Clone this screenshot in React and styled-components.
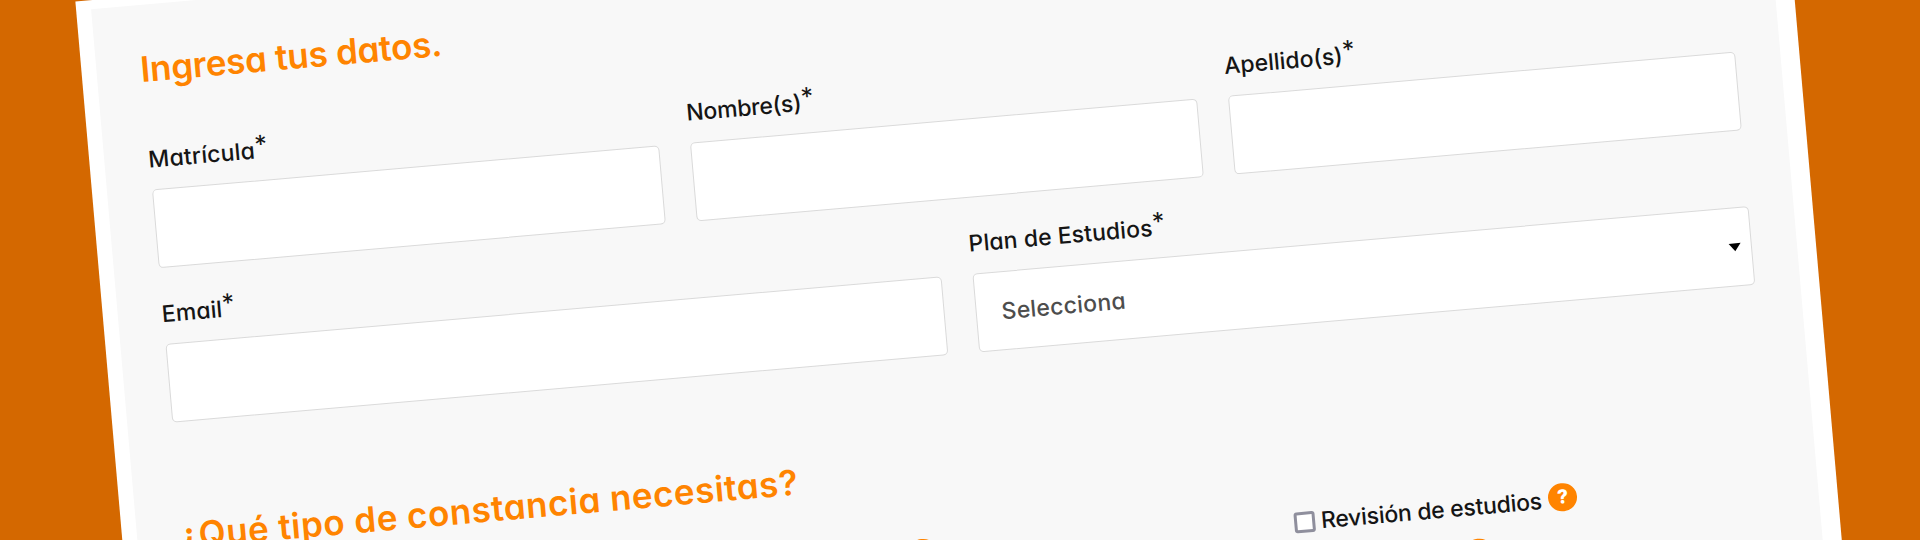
import React from 'react'
import styled, { createGlobalStyle } from 'styled-components'

const GlobalStyle = createGlobalStyle`
  * {
    box-sizing: border-box;
  }
  body {
    margin: 0;
    background: #d46800;
    font-family: Inter, 'Open Sans', sans-serif;
    /* single-storey a */
    font-feature-settings: 'cv11' 1, 'kern' 1;
  }
`

const StyledWrapper = styled.main`
  width: 1920px;
  height: 540px;
  overflow: hidden;
  background: #d46800;
  display: flex;
  align-items: flex-start;
`

const Sheet = styled.div`
  flex: none;
  width: 1713px;
  height: 800px;
  margin: 7.5px 0 0 74.7px;
  padding: 9.4px 19.2px 0 14.8px;
  background: #fff;
  transform-origin: -74.7px -7.5px;
  transform: rotate(-4.98deg);
`

const Form = styled.form`
  height: 100%;
  padding: 42px 45px 0 45.2px;
  background: #f8f8f8;
`

const Title = styled.h2`
  margin: ${(p) => p.$top || 0}px 0 0 ${(p) => p.$left || 0}px;
  font-size: 35px;
  line-height: 44px;
  font-weight: 600;
  letter-spacing: ${(p) => p.$track || 0}px;
  white-space: nowrap;
  color: #ff8400;
`

const Row = styled.div`
  display: grid;
  grid-template-columns: repeat(${(p) => p.$cols}, 1fr);
  column-gap: 31px;
  margin-top: ${(p) => p.$top}px;
`

const Label = styled.label`
  display: flex;
  height: 44px;
  margin: 0 0 8px -1px;
  font-size: 23px;
  line-height: 45px;
  font-weight: 550;
  letter-spacing: ${(p) => p.$track || 0}px;
  white-space: nowrap;
  color: #151515;
  span {
    margin: -6px 0 0;
    font-size: 25px;
    font-weight: 400;
    letter-spacing: 0;
  }
`

const Control = styled.div`
  height: 79px;
  display: flex;
  align-items: center;
  justify-content: space-between;
  padding: 1px 10px 0 25px;
  border: 1px solid #dadada;
  border-radius: 5px;
  background: #fff;
  font-size: 23px;
  font-weight: 550;
  letter-spacing: 0.25px;
  color: #4d4d4d;
`

const Arrow = styled.i`
  border: 6px solid transparent;
  border-top: 8px solid #000;
  border-bottom: 0;
`

const Options = styled.div`
  display: grid;
  grid-template-columns: 569px 540px 1fr;
  grid-auto-rows: 48px;
  margin-top: 38px;
`

const Option = styled.div`
  display: flex;
  align-items: center;
`

const Box = styled.i`
  flex: none;
  width: 21px;
  height: 21px;
  margin: 1px 6px 0 0;
  border: 3px solid #8f8f9d;
  border-radius: 3px;
  background: #fff;
`

const OptionText = styled.span`
  min-width: ${(p) => p.$min || 0}px;
  font-size: 23px;
  font-weight: 550;
  letter-spacing: ${(p) => p.$track || 0}px;
  white-space: nowrap;
  color: #151515;
`

const Help = styled.b`
  flex: none;
  width: 28.8px;
  height: 28.8px;
  margin: -4px 0 0 7px;
  border-radius: 50%;
  background: #ff8400;
  color: #fff;
  font-size: 19px;
  line-height: 28.8px;
  font-weight: 800;
  text-align: center;
`

const Field = ({ label, track, children }) => (
  <div>
    <Label $track={track}>
      {label}
      <span>*</span>
    </Label>
    <Control>{children}</Control>
  </div>
)

const Choice = ({ label, track, min }) => (
  <Option>
    <Box />
    <OptionText $track={track} $min={min}>
      {label}
    </OptionText>
    <Help>?</Help>
  </Option>
)

export default function App() {
  return (
    <StyledWrapper>
      <GlobalStyle />
      <Sheet>
        <Form>
          <Title $left={-1} $track={-0.2}>
            Ingresa tus datos.
          </Title>
          <Row $cols={3} $top={46.6}>
            <Field label="Matrícula" track={0.2} />
            <Field label="Nombre(s)" track={-0.2} />
            <Field label="Apellido(s)" />
          </Row>
          <Row $cols={2} $top={24}>
            <Field label="Email" track={0.1} />
            <Field label="Plan de Estudios" track={0.1}>
              Selecciona
              <Arrow />
            </Field>
          </Row>
          <Title $top={91} $left={-3} $track={0.53}>
            ¿Qué tipo de constancia necesitas?
          </Title>
          <Options>
            <span />
            <Choice min={119} />
            <Choice label="Revisión de estudios" track={-0.25} />
            <span />
            <span />
            <Choice min={133} />
          </Options>
        </Form>
      </Sheet>
    </StyledWrapper>
  )
}
